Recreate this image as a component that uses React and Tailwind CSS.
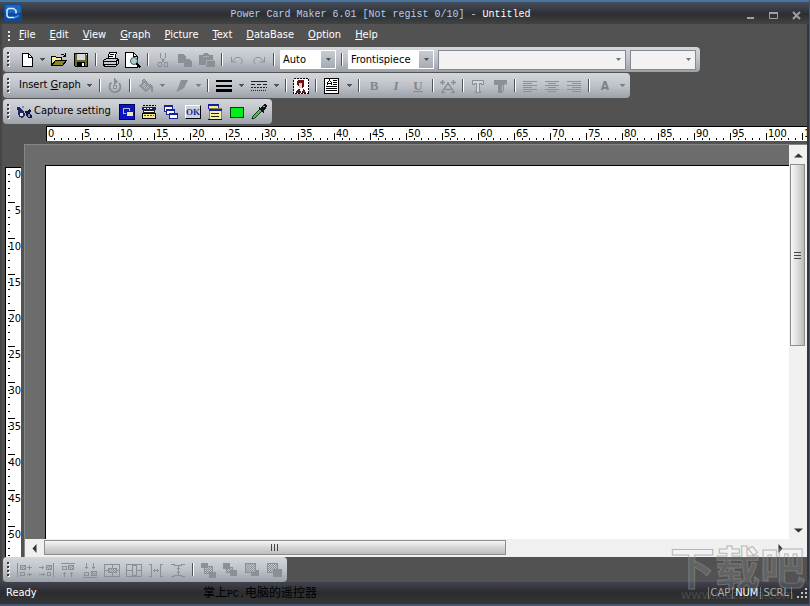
import React from "react";

const menus = ["File", "Edit", "View", "Graph", "Picture", "Text", "DataBase", "Option", "Help"];
const topMarks = Array.from({ length: 22 }, (_, i) => i * 5);
const sideMarks = Array.from({ length: 11 }, (_, i) => i * 5);

const G = "#8b8f96";

function Icon({ children, w = 16 }) {
  return (
    <svg width={w} height="16" viewBox={`0 0 ${w} 16`} fill="none" stroke="currentColor" shapeRendering="crispEdges" className="shrink-0" aria-hidden="true">
      {children}
    </svg>
  );
}

function Tool({ label, className = "w-[22px]", children }) {
  return (
    <button type="button" aria-label={label} className={`flex h-full shrink-0 items-center justify-center ${className}`}>
      {children}
    </button>
  );
}

function Arrow({ label = "More", dim }) {
  return (
    <Tool label={label} className="w-[11px]">
      <svg width="5" height="3" viewBox="0 0 5 3" shapeRendering="crispEdges" aria-hidden="true">
        <path d="M0 0h5v1h-1v1h-1v1h-1v-1h-1v-1h-1z" fill={dim ? "#7b8088" : "#4c5058"} />
      </svg>
    </Tool>
  );
}

function Sep({ className = "w-2" }) {
  return (
    <span className={`flex h-full shrink-0 items-center justify-center ${className}`}>
      <span className="h-[13px] w-0.5 border-l border-r border-l-[#4e535b] border-r-white" />
    </span>
  );
}

function Grip({ className = "w-[14px] pl-1", menu }) {
  return (
    <span className={`flex h-full shrink-0 items-center ${className}`}>
      {menu ? (
        <svg width="2" height="10" viewBox="0 0 2 10" shapeRendering="crispEdges" aria-hidden="true">
          <path d="M0 0h2v2H0zM0 4h2v2H0zM0 8h2v2H0z" fill="#e8e8e8" />
        </svg>
      ) : (
        <svg width="3" height="15" viewBox="0 0 3 15" shapeRendering="crispEdges" aria-hidden="true">
          {[0, 4, 8, 12].map((y) => (
            <g key={y}>
              <path d={`M1 ${y + 1}h2v2h-2z`} fill="#fff" />
              <path d={`M0 ${y}h2v2h-2z`} fill="#353a42" />
            </g>
          ))}
        </svg>
      )}
    </span>
  );
}

function Bar({ label, className = "", children }) {
  return (
    <div role="toolbar" aria-label={label} className={`flex h-[25px] w-fit items-center rounded bg-gradient-to-b from-[#d3d6da] via-[#bfc3c9] to-[#9ba1aa] ${className}`}>
      {children}
    </div>
  );
}

function Combo({ label, value, className }) {
  return (
    <span className={`relative flex h-[19px] shrink-0 bg-white ${className}`}>
      <select aria-label={label} className="w-full appearance-none bg-transparent pl-[3px] text-[11px] leading-[19px] text-black outline-none">
        <option>{value}</option>
      </select>
      <span className="pointer-events-none absolute inset-y-px right-px flex w-[14px] items-center justify-center bg-gradient-to-b from-[#c9cdd2] to-[#a4aab3]">
        <svg width="5" height="3" viewBox="0 0 5 3" aria-hidden="true"><path d="M0 0h5L2.500 3z" fill="#4c5058" /></svg>
      </span>
    </span>
  );
}

function EmptyCombo({ label, className }) {
  return (
    <span className={`relative flex h-5 shrink-0 border border-[#858a92] bg-[#f2f2f2] ${className}`}>
      <select aria-label={label} disabled className="w-full appearance-none bg-transparent text-[11px] outline-none" />
      <span className="pointer-events-none absolute inset-y-0 right-1 flex items-center">
        <svg width="5" height="3" viewBox="0 0 5 3" aria-hidden="true"><path d="M0 0h5L2.500 3z" fill="#70747a" /></svg>
      </span>
    </span>
  );
}

function Hatch() {
  return (
    <defs>
      <pattern id="hatch" width="2" height="2" patternUnits="userSpaceOnUse">
        <path d="M0 0h1v1h-1zM1 1h1v1h-1z" fill={G} stroke="none" />
      </pattern>
    </defs>
  );
}

function FileBar() {
  return (
    <Bar label="Standard" className="pr-1">
      <Grip />
      <Tool label="New" className="w-5">
        <Icon><path d="M3.500 1.500h6l4 4v9h-10z" fill="#fff" stroke="#000" /><path d="M9.500 1.500v4h4" stroke="#000" /></Icon>
      </Tool>
      <Arrow label="New options" />
      <Tool label="Open">
        <Icon>
          <path d="M.5 13.500v-9h4l1 1h5v3" fill="#f4f08a" stroke="#000" />
          <path d="M.5 13.500l4-5h11l-4 5z" fill="#8a8722" stroke="#000" />
          <path d="M9.500 3.500l1-1h2l2 2M14.500 1v4M12 4.500h3" stroke="#000" />
        </Icon>
      </Tool>
      <Tool label="Save">
        <Icon>
          <path d="M1.500 1.500h13v13h-12l-1-1z" fill="#6a6b22" stroke="#000" />
          <path d="M4 2h8v6H4z" fill="#d7d9dc" stroke="none" /><path d="M4 10h8v4H4z" fill="#000" stroke="none" />
          <path d="M9 11h2v3H9zM13 2h1v1h-1z" fill="#fff" stroke="none" />
        </Icon>
      </Tool>
      <Sep />
      <Tool label="Print">
        <Icon>
          <path d="M4.500 7.500l2-7h7l-2 7z" fill="#fff" stroke="#000" />
          <path d="M7 2.500h4M6 4.500h4" stroke="#000" />
          <path d="M.5 8.500l3-2h10l2 1v4l-3 3h-10l-2-1z" fill="#c8cacd" stroke="#000" />
          <path d="M1 9.500h12M1 12.500h12M13.500 9v5M13 8.500h2" stroke="#000" />
          <path d="M8 11h3v1H8z" fill="#e5dc40" stroke="none" />
        </Icon>
      </Tool>
      <Tool label="Print preview">
        <Icon>
          <path d="M.5.500h8l4 4v11h-12z" fill="#fff" stroke="#000" /><path d="M8.500.500v4h4" stroke="#000" />
          <circle cx="9" cy="9" r="3.500" fill="#a9d3d3" stroke="#405a5c" shapeRendering="auto" />
          <path d="M11.500 11.500l4 4" stroke="#000" strokeWidth="2" />
        </Icon>
      </Tool>
      <Sep />
      <Tool label="Cut">
        <Icon>
          <path d="M5.500 1v4l4 6M10.500 1v4l-4 6" stroke={G} />
          <circle cx="5" cy="12.500" r="2" stroke={G} /><circle cx="11" cy="12.500" r="2" stroke={G} />
        </Icon>
      </Tool>
      <Tool label="Copy">
        <Icon><path d="M1 2h5l3 3v2h3l3 3v5H7v-4H1z" fill={G} stroke="none" /></Icon>
      </Tool>
      <Tool label="Paste">
        <Icon>
          <path d="M0 3h4l1-2h4l1 2h4v5l2 2v5H7v-2H0z" fill={G} stroke="none" />
          <path d="M4 4.500h6M7.500 13V8.500H14" stroke="#a9adb4" />
        </Icon>
      </Tool>
      <Sep />
      <Tool label="Undo">
        <Icon><path d="M2.500 5v5h5M3 9.500l4-4h4l2 2v3l-2 2" stroke={G} shapeRendering="auto" /></Icon>
      </Tool>
      <Tool label="Redo">
        <Icon><path d="M13.500 5v5h-5M13 9.500l-4-4H5l-2 2v3l2 2" stroke={G} shapeRendering="auto" /></Icon>
      </Tool>
      <Sep />
      <Combo label="Zoom" value="Auto" className="ml-0.5 w-14" />
      <Sep className="ml-0.5 w-2" />
      <Combo label="Page" value="Frontispiece" className="ml-0.5 w-[86px]" />
      <EmptyCombo label="Font" className="ml-1 w-[188px]" />
      <EmptyCombo label="Font size" className="ml-1 w-[66px]" />
    </Bar>
  );
}

function AlignIcon({ rows }) {
  return <Icon><path d={rows} stroke={G} /></Icon>;
}

function FormatBar() {
  return (
    <Bar label="Format" className="pr-0.5">
      <Grip />
      <button type="button" className="w-[67px] shrink-0 pl-0.5 text-left text-[11px] whitespace-nowrap text-black">
        Insert <u>G</u>raph
      </button>
      <Arrow />
      <Sep className="w-2.5" />
      <Tool label="Rotate" className="w-5">
        <Icon>
          <path d="M4.500 4.500A5.500 5.500 0 1 0 12 5" stroke={G} strokeWidth="2" shapeRendering="auto" />
          <path d="M7 0l4 3-4 4z" fill={G} stroke="none" /><path d="M6 7h4v4H6z" fill={G} stroke="none" /><path d="M7 8h2v2H7z" fill="#c0c4ca" stroke="none" />
        </Icon>
      </Tool>
      <Sep className="w-2.5" />
      <Tool label="Fill colour">
        <Icon>
          <path d="M2 8l5-5 6 6-5 4z" fill="url(#hatch)" stroke={G} strokeWidth="1.500" shapeRendering="auto" /><Hatch />
          <path d="M4.500 6V2.500l2-1 2 2V8" stroke={G} /><path d="M12 6l3 3v5h-2V9z" fill={G} stroke="none" />
        </Icon>
      </Tool>
      <Arrow dim />
      <Tool label="Line colour" className="w-[25px]">
        <Icon><path d="M8 2h7l-4 8-3 2-5 2 2-4z" fill={G} stroke="none" shapeRendering="auto" /></Icon>
      </Tool>
      <Arrow dim />
      <Sep />
      <Tool label="Line width" className="w-6">
        <Icon><path d="M0 3h16M0 8h16" stroke="#000" strokeWidth="2" /><path d="M0 11h16v3H0z" fill="#000" stroke="none" /></Icon>
      </Tool>
      <Arrow />
      <Tool label="Line style" className="w-6">
        <Icon>
          <path d="M0 3.500h16" stroke="#222" /><path d="M0 6.500h16" stroke="#222" strokeDasharray="4 2" />
          <path d="M0 9.500h16" stroke="#222" strokeDasharray="2 1" /><path d="M0 12.500h16" stroke="#222" strokeDasharray="1 1" />
        </Icon>
      </Tool>
      <Arrow />
      <Sep />
      <Tool label="Insert picture">
        <Icon>
          <path d="M.5.500h15v15h-15z" fill="#fff" stroke="#000" strokeDasharray="2 1" />
          <path d="M5 2h5l1 1v5l-1 2H9V5H6v3H5L4 6V3z" fill="#701018" stroke="none" />
          <path d="M6 5h3v5H6z" fill="#efc9b8" stroke="none" /><path d="M3 15l1-3 2-1h1l1 4zM9 15l1-4 2 1 1 3z" fill="#5e1720" stroke="none" />
        </Icon>
      </Tool>
      <Sep />
      <Tool label="Text block" className="w-6">
        <Icon>
          <path d="M.5.500h14v15H.5z" fill="#fff" stroke="#000" />
          <path d="M3.500 7V5l2-3 2 3v2M3 5.500h4M9 2.500h4M9 4.500h4M9 6.500h4M2 8.500h11M2 10.500h11M2 12.500h11" stroke="#000" />
        </Icon>
      </Tool>
      <Arrow />
      <Sep />
      <Tool label="Bold"><span className="font-['Liberation_Serif',serif] text-[13px] font-bold text-[#82868d]">B</span></Tool>
      <Tool label="Italic"><span className="font-['Liberation_Serif',serif] text-[13px] font-bold text-[#82868d] italic">I</span></Tool>
      <Tool label="Underline"><span className="font-['Liberation_Serif',serif] text-[13px] font-bold text-[#82868d] underline">U</span></Tool>
      <Sep />
      <Tool label="Character spacing">
        <Icon><path d="M2 14l6-9 6 9M5 11.500h6M1 14.500h4M11 14.500h4M0 4.500h5M2.500 2v5M11 4.500h5M13.500 2v5" stroke={G} strokeWidth="1.500" shapeRendering="auto" /></Icon>
      </Tool>
      <Sep />
      <Tool label="Outline text">
        <Icon><path d="M2.500 2.500h11v4h-2v-1h-2v8h1v1h-5v-1h1v-8h-2v1h-2z" fill="#d4d7da" stroke={G} /></Icon>
      </Tool>
      <Tool label="Shadow text">
        <Icon><path d="M2 2h13v5h-3v5l-2 3H6V7H2z" fill={G} stroke="none" /><path d="M13.500 5v2M10.500 7v6" stroke="#b5b9bf" /></Icon>
      </Tool>
      <Sep />
      <Tool label="Align left"><AlignIcon rows="M1 3.500h14M1 5.500h9M1 7.500h14M1 9.500h9M1 11.500h14M1 13.500h9" /></Tool>
      <Tool label="Align centre"><AlignIcon rows="M1 3.500h14M4 5.500h8M1 7.500h14M4 9.500h8M1 11.500h14M4 13.500h8" /></Tool>
      <Tool label="Align right"><AlignIcon rows="M1 3.500h14M6 5.500h9M1 7.500h14M6 9.500h9M1 11.500h14M6 13.500h9" /></Tool>
      <Sep />
      <Tool label="Font colour" className="w-6"><span className="text-[12px] font-bold text-[#7d8289]">A</span></Tool>
      <Arrow dim />
    </Bar>
  );
}

function CaptureBar() {
  return (
    <Bar label="Capture" className="pr-0.5">
      <Grip />
      <button type="button" className="flex w-[99px] shrink-0 items-center text-left text-[11px] whitespace-nowrap text-black">
        <Icon w={17}>
          <path d="M0 3h3l2 3 2 1 1 4-3 3-3-1-1-4z" fill="#20265c" stroke="none" /><path d="M3 9h3v3H3z" fill="#d9def4" stroke="none" />
          <path d="M8 7h2l3-3 1 3-2 2 3 2v3h-4l-2-3z" fill="#111540" stroke="none" /><path d="M11 10h2v3h-2zM5 2h2v2H5z" fill="#7d87c6" stroke="none" />
        </Icon>
        Capture setting
      </button>
      <Tool label="Capture window">
        <Icon>
          <path d="M.5.500h15v15H.5z" fill="#0a16c0" stroke="#000060" /><path d="M4 4h7v6H4z" fill="#b7bcc8" stroke="none" />
          <path d="M5 5h5v4H5z" fill="#0a16c0" stroke="none" /><path d="M7 7h7v5H7z" fill="#0a16c0" stroke="none" /><path d="M8 8h6v4H8z" fill="#ece9b0" stroke="none" />
        </Icon>
      </Tool>
      <Tool label="Capture object">
        <Icon>
          <path d="M1 3h14v3H1z" fill="#171a86" stroke="none" /><path d="M2 1.500h13" stroke="#000" strokeDasharray="2 1" />
          <path d="M2.500 6.500h11v2h-11z" fill="#fff" stroke="#222" /><path d="M1.500 9.500h13v5h-13z" fill="#f5e98c" stroke="#000" />
          <path d="M3 11.500h10" stroke="#b01818" strokeDasharray="2 1" /><path d="M3 4.500h8" stroke="#fff" strokeDasharray="2 1" />
        </Icon>
      </Tool>
      <Tool label="Capture cascade">
        <Icon>
          <path d="M1.500 1.500h8v6h-8z" fill="#fff" stroke="#16209c" /><path d="M1 2h9" stroke="#16209c" strokeWidth="2" />
          <path d="M3.500 5.500h8v5h-8z" fill="#fff" stroke="#16209c" /><path d="M3 6h9" stroke="#16209c" strokeWidth="2" />
          <path d="M6.500 9.500h8v5h-8z" fill="#fff" stroke="#16209c" /><path d="M6 10h9" stroke="#16209c" strokeWidth="2" />
        </Icon>
      </Tool>
      <Tool label="Capture button">
        <span className="border border-t-white border-r-black border-b-black border-l-white bg-[#cdd2da] font-['Liberation_Serif',serif] text-[9px] leading-[12px] font-bold text-[#1a2a9c]">OK</span>
      </Tool>
      <Tool label="Capture menu">
        <Icon>
          <path d="M1.500.500h10v4h-10z" fill="#f3ea9b" stroke="#16209c" /><path d="M1 1h11" stroke="#16209c" strokeWidth="2" />
          <path d="M2.500 4.500h12v11h-12z" fill="#f7efa6" stroke="#8a8640" /><path d="M2 6h13" stroke="#16209c" strokeWidth="2" />
          <path d="M4 9.500h8M4 12.500h8" stroke="#222" /><path d="M1 15.500h14" stroke="#111" />
        </Icon>
      </Tool>
      <Tool label="Capture area">
        <Icon><path d="M1.500 3.500h13v10h-13z" fill="#00ee1c" stroke="#083d08" /></Icon>
      </Tool>
      <Tool label="Pick colour">
        <Icon>
          <path d="M1 15l1-3 7-7 2 2-7 7z" fill="#58b567" stroke="#123a18" shapeRendering="auto" /><path d="M8 3l5 5-1 1-5-5z" fill="#111" stroke="none" />
          <path d="M9 4l3-3 2-1 2 2-1 2-3 3z" fill="#111" stroke="none" /><path d="M12 2.500h2" stroke="#9aa" />
        </Icon>
      </Tool>
    </Bar>
  );
}

const arrange = [
  ["Align left edges", "M1.500 1v14M4.500 3.500h5v4h-5zM11 5.500h5M13.500 3v5M11 12.500h5M13.500 11v3", "6.500,12", "M5 4h4v3H5z"],
  ["Align right edges", "M15.500 1v14M8.500 3.500h5v4h-5zM1 5.500h5M4.500 4v3M1 12.500h6M5.500 11v3", "11,12", "M9 4h4v3H9z"],
  ["Align top edges", "M1 1.500h14M8.500 3.500h5v4h-5zM4.500 10v5M3 11.500h3M11.500 10v5M10 11.500h3", "4.500,6", "M9 4h4v3H9z"],
  ["Align bottom edges", "M1 15.500h14M9.500 9.500h5v4h-5zM4.500 1v6M3 5.500h3M11.500 1v6M10 5.500h3", "4.500,12", "M10 10h4v3h-4z"],
  ["Centre vertically", "M.5 2.500h15v12H.5zM4.500 6.500h8v4h-8zM8.500 3v3M8.500 11v3M1 8.500h3M13 8.500h2", null, "M5 7h7v3H5z"],
  ["Centre horizontally", "M.5 2.500h15v12H.5zM6.500 3.500h4v10h-4zM1 8.500h5M11 8.500h4", null, null],
  ["Space across", "M1 2.500h2.500v12H1M15 2.500h-2.500v12H15M5 8.500h6M6.500 7v3M9.500 7v3", null, null],
  ["Space down", "M1 2.500h4M11 2.500h4M1 14.500h4M11 14.500h4M4 3.500h8M4 13.500h8M8.500 4v9M7 6.500h3M7 10.500h3", null, null],
];

const layers = [
  ["Bring to front", "M1 1h7v5H1zM9 10h7v6H9z", "M4.500 4.500h8v7h-8z"],
  ["Send to back", "M1 1h7v6H1zM8 8h7v6H8z", "M4.500 5.500h6v5h-6z"],
  ["Bring forward", "M11 8h4v6H7v-3h4z", "M1.500 1.500h10v9h-10z"],
  ["Send backward", "M7 7h9v8H7z", "M1.500 1.500h10v9h-10z"],
];

function ArrangeBar() {
  return (
    <Bar label="Arrange" className="pr-0.5">
      <Grip className="w-2.5 pl-1" />
      {arrange.map(([name, d, ring, fill]) => (
        <Tool key={name} label={name}>
          <Icon>
            {fill && <path d={fill} fill="url(#hatch)" stroke="none" />}
            <path d={d} stroke={G} />
            {ring && <circle cx={ring.split(",")[0]} cy={ring.split(",")[1]} r="2" stroke={G} />}
          </Icon>
        </Tool>
      ))}
      <Sep />
      {layers.map(([name, solid, box]) => (
        <Tool key={name} label={name}>
          <Icon>
            <path d={box} fill="url(#hatch)" stroke={G} />
            <path d={solid} fill={G} stroke="none" />
          </Icon>
        </Tool>
      ))}
    </Bar>
  );
}

function TopRuler() {
  return (
    <div className="ml-[43px] flex h-[15px] overflow-hidden border-t border-l border-black bg-white">
      {topMarks.map((n) => (
        <span key={n} className="relative h-full w-9 shrink-0 pl-px text-[11px] leading-[14px] text-black">
          <svg className="absolute inset-0" width="36" height="14" shapeRendering="crispEdges" aria-hidden="true">
            <path d="M7 11h1v2h-1zM14 11h1v2h-1zM21 11h1v2h-1zM28 11h1v2h-1zM35 6h1v7h-1z" />
          </svg>
          {n}
        </span>
      ))}
    </div>
  );
}

function SideRuler() {
  return (
    <div className="mt-[23px] ml-0.5 w-4 shrink-0 overflow-hidden border-t border-l border-black bg-white">
      {sideMarks.map((n) => (
        <span key={n} className="relative block h-9 text-right text-[11px] leading-[14px] text-black">
          <svg className="absolute inset-0" width="14" height="36" shapeRendering="crispEdges" aria-hidden="true">
            <path d="M2 6h2v1H2zM2 13h2v1H2zM2 20h2v1H2zM2 27h2v1H2zM2 34h7v1H2z" />
          </svg>
          {n}
        </span>
      ))}
    </div>
  );
}

function ScrollArrow({ label, d, className }) {
  return (
    <button type="button" aria-label={label} className={`flex shrink-0 items-center justify-center ${className}`}>
      <svg width="9" height="9" viewBox="0 0 9 9" aria-hidden="true"><path d={d} fill="#333" /></svg>
    </button>
  );
}

function Workspace() {
  return (
    <div className="ml-[3px] flex min-w-0 flex-1 flex-col border-t border-l border-[#868686] bg-[#6c6c6c]">
      <div className="flex min-h-0 flex-1">
        <main className="mt-5 ml-5 flex-1 border-t border-l border-black bg-white" aria-label="Card canvas" />
        <div className="flex w-[18px] shrink-0 flex-col bg-[#f0f0f0] px-px pt-px">
          <ScrollArrow label="Scroll up" className="h-[18px]" d="M0 6.500h9L4.500 2.500z" />
          <div className="min-h-0 flex-1">
            <div className="flex h-[51%] w-[15px] flex-col items-center justify-center gap-0.5 border border-[#8e8e8e] bg-gradient-to-r from-[#f6f6f6] via-[#dedede] to-[#b9b9b9]">
              <i className="h-px w-[7px] bg-[#444]" /><i className="h-px w-[7px] bg-[#444]" /><i className="h-px w-[7px] bg-[#444]" />
            </div>
          </div>
          <ScrollArrow label="Scroll down" className="h-[18px]" d="M0 2.500h9L4.500 6.500z" />
        </div>
      </div>
      <div className="flex h-[18px] shrink-0 bg-[#f0f0f0] pr-[18px]">
        <ScrollArrow label="Scroll left" className="w-[19px]" d="M6.500 0v9L2.500 4.500z" />
        <div className="min-w-0 flex-1 pt-px">
          <div className="flex h-[15px] w-[63.5%] items-center justify-center gap-0.5 border border-[#8e8e8e] bg-gradient-to-b from-[#f6f6f6] via-[#d6d6d6] to-[#bdbdbd]">
            <i className="h-[7px] w-px bg-[#444]" /><i className="h-[7px] w-px bg-[#444]" /><i className="h-[7px] w-px bg-[#444]" />
          </div>
        </div>
        <ScrollArrow label="Scroll right" className="w-[18px]" d="M2.500 0v9L6.500 4.500z" />
      </div>
    </div>
  );
}

function TitleBar() {
  return (
    <header className="grid h-6 shrink-0 grid-cols-[1fr_auto_1fr] items-center border-t-2 border-[#4676a2] bg-gradient-to-b from-[#454b57] from-5% via-[#2d2e31] via-55% to-[#424344] px-1">
      <svg width="18" height="18" viewBox="0 0 18 18" aria-hidden="true">
        <rect width="18" height="18" rx="2" fill="#0b4a9d" />
        <rect x="1" y="1" width="16" height="8" rx="2" fill="#1c66bd" />
        <path d="M10 4.500H4.500L3 6v6l1.500 1.500h6M9.500 4.500l2.500 2v3" fill="none" stroke="#dceeff" strokeWidth="1.500" />
        <path d="M11 13h2M14 11v2" stroke="#8cc0f0" />
      </svg>
      <h1 className="mt-1 mr-12 font-['Liberation_Mono',monospace] text-[10px] leading-4 whitespace-pre text-[#b4d0ee]">
        Power Card Maker 6.01 [Not regist 0/10] - <span className="text-white">Untitled</span>
      </h1>
      <div className="flex justify-end gap-1 pt-1 text-[#a0a0a0]">
        <button type="button" aria-label="Minimize" className="flex w-[18px] justify-center">
          <svg width="9" height="9" viewBox="0 0 9 9"><path d="M1 7h7" stroke="currentColor" strokeWidth="2" /></svg>
        </button>
        <button type="button" aria-label="Maximize" className="flex w-[20px] justify-center">
          <svg width="9" height="9" viewBox="0 0 9 9"><path d="M.5 2.500h8v5h-8z" stroke="currentColor" fill="none" /><path d="M0 2h9" stroke="currentColor" strokeWidth="2" /></svg>
        </button>
        <button type="button" aria-label="Close" className="flex w-[18px] justify-center">
          <svg width="9" height="9" viewBox="0 0 9 9"><path d="M1 1l7 7M8 1l-7 7" stroke="currentColor" strokeWidth="2" /></svg>
        </button>
      </div>
    </header>
  );
}

export default function App() {
  return (
    <div className="relative flex h-screen flex-col overflow-hidden border-r border-b-2 border-[#46566e] bg-[#525252] font-['DejaVu_Sans_Condensed','Open_Sans','Noto_Sans_CJK_SC',sans-serif] text-white">
      <TitleBar />
      <div className="flex min-h-0 flex-1 flex-col border-r-2 border-l-2 border-r-[#363636] border-l-[#454545] pl-px">
        <nav aria-label="Main menu" className="flex h-[23px] shrink-0 items-center text-[11px]">
          <Grip className="w-[9px] pl-[5px]" menu />
          {menus.map((m) => (
            <button key={m} type="button" className="px-[7px]">
              <u>{m[0]}</u>{m.slice(1)}
            </button>
          ))}
        </nav>
        <div className="flex shrink-0 flex-col gap-px">
          <FileBar />
          <FormatBar />
          <CaptureBar />
        </div>
        <div className="pt-0.5"><TopRuler /></div>
        <div className="mt-[3px] flex min-h-0 flex-1">
          <SideRuler />
          <Workspace />
        </div>
        <ArrangeBar />
      </div>
      <footer className="flex h-[22px] shrink-0 items-center bg-gradient-to-b from-[#41424e] via-[#2b2c2e] to-[#343536] pl-1.5 text-[11px]">
        <span className="w-[197px]">Ready</span>
        <span className="font-['Noto_Sans_CJK_SC',sans-serif] text-[12px] leading-4 text-black">
          掌上<span className="font-['Liberation_Mono',monospace] text-[10px]">PC.</span>电脑的遥控器
        </span>
        <span className="ml-auto flex items-center pr-0.5 leading-3 text-[#a8a8a8]">
          <span className="border-l border-[#777] px-0.5">CAP</span>
          <span className="border-l border-[#777] px-0.5 text-white">NUM</span>
          <span className="border-x border-[#777] px-0.5">SCRL</span>
          <svg className="ml-1" width="11" height="11" viewBox="0 0 11 11" fill="#c4c4c4" aria-hidden="true">
            <path d="M9 0h2v2H9zM9 4h2v2H9zM9 8h2v2H9zM5 4h2v2H5zM5 8h2v2H5zM1 8h2v2H1z" />
          </svg>
        </span>
      </footer>
      <div className="pointer-events-none absolute right-1 bottom-1 flex flex-col items-center font-['Noto_Sans_CJK_SC',sans-serif]">
        <span className="text-[45px] leading-[44px] font-bold text-white/10 [-webkit-text-stroke:1px_rgba(140,140,140,0.6)]">下载吧</span>
        <span className="text-[13px] leading-3 text-white/15">www.xiazaiba.com</span>
      </div>
    </div>
  );
}
